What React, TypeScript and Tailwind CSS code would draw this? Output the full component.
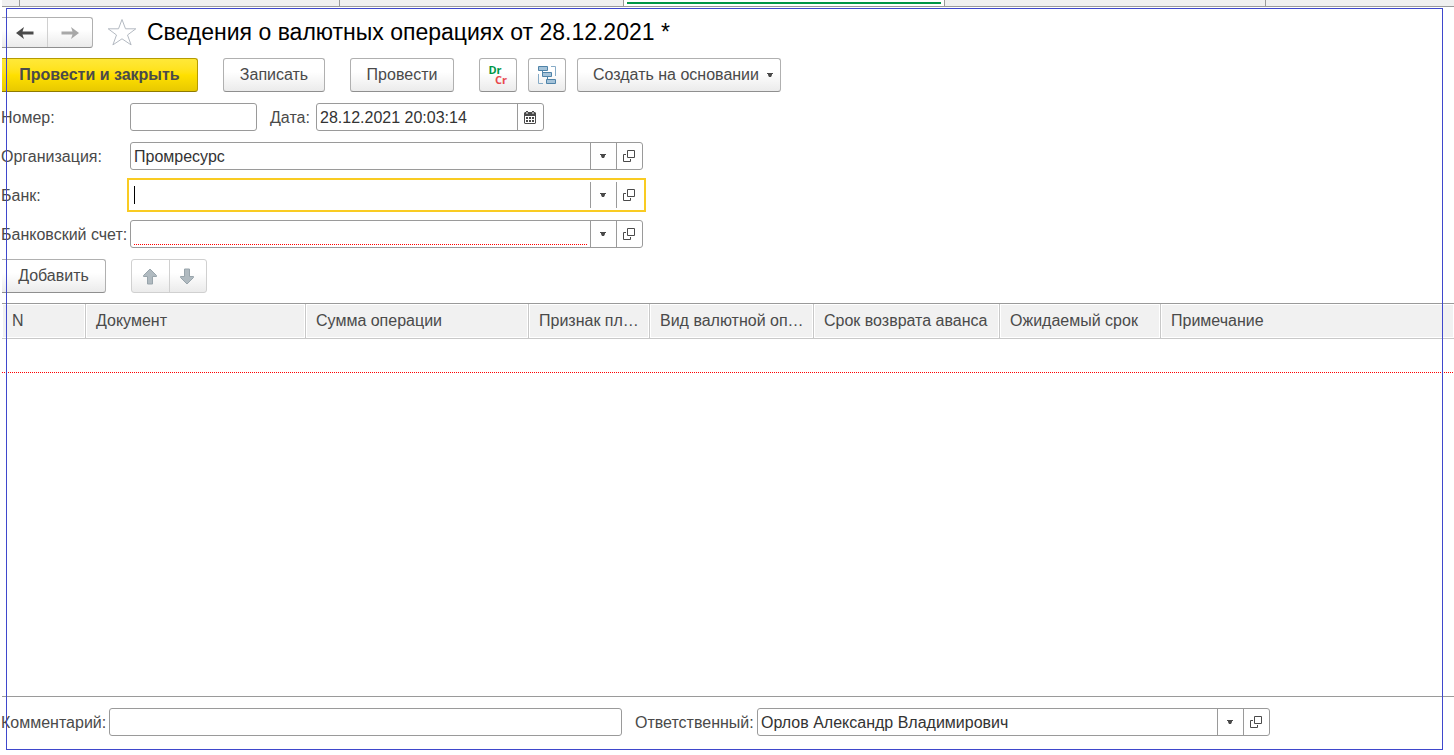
import type { ReactNode } from "react"

const columns = [
  { title: "N", width: "w-[84px]" },
  { title: "Документ", width: "w-[220px]" },
  { title: "Сумма операции", width: "w-[223px]" },
  { title: "Признак пл…", width: "w-[121px]" },
  { title: "Вид валютной оп…", width: "w-[164px]" },
  { title: "Срок возврата аванса", width: "w-[186px]" },
  { title: "Ожидаемый срок", width: "w-[161px]" },
  { title: "Примечание", width: "" },
]

const buttonBase =
  "flex h-[34px] items-center justify-center rounded-[3px] border border-[#b0b0b0] border-b-[#8f8f8f] bg-linear-to-b from-white from-40% to-[#ebebeb]"

function CaretIcon() {
  return (
    <svg width="6" height="4" viewBox="0 0 6 4" fill="#4a4a4a" aria-hidden="true">
      <path d="M0 0h6v1H5v1L4 4H2L1 2V1H0z" />
    </svg>
  )
}

function OpenIcon() {
  return (
    <svg width="12" height="12" viewBox="0 0 12 12" fill="none" stroke="#4a4a4a" aria-hidden="true">
      <path d="M4.500.5h7v7h-7zM3 4.500H.5v7h7V9" />
    </svg>
  )
}

function CalendarIcon() {
  return (
    <svg width="12" height="13" viewBox="0 0 12 13" aria-hidden="true">
      <path d="M1 1h1V0h2v1h4V0h2v1h1l1 1v10l-1 1H1l-1-1V2z" fill="#4a4a4a" />
      <path d="M2.500 1h1v2h-1zM8.500 1h1v2h-1z" fill="#fff" />
      <path d="M1 5h10v7H1z" fill="#fff" />
      <path d="M2 6h2v2H2zM5 6h2v2H5zM8 6h2v2H8zM2 9h2v2H2zM5 9h2v2H5zM8 9h2v2H8z" fill="#4a4a4a" />
    </svg>
  )
}

function StarIcon() {
  return (
    <svg width="30" height="28" viewBox="0 0 30 28" fill="none" stroke="#b4bac2" aria-hidden="true">
      <path d="M15 1.500l3.500 9.300h10.300l-8.300 6.200 3.600 9.900L15 20.800l-9.100 6.100L9.500 17 1.200 10.800h10.300z" />
    </svg>
  )
}

function ArrowIcon({ color, flip }: { color: string; flip?: boolean }) {
  return (
    <svg width="18" height="12" viewBox="0 0 18 12" fill={color} className={flip ? "rotate-180" : ""} aria-hidden="true">
      <path d="M0 6L8 0L6.500 4.500H17.500v3H6.500L8 12z" />
    </svg>
  )
}

function MoveIcon({ down }: { down?: boolean }) {
  return (
    <svg width="16" height="17" viewBox="0 0 16 17" className={down ? "rotate-180" : ""} aria-hidden="true">
      <path d="M8 1l6.500 6.500v1h-4v7.500h-5V8.500h-4v-1z" fill="#b0bac0" stroke="#98a4ab" />
    </svg>
  )
}

function StructureIcon() {
  return (
    <svg width="20" height="20" viewBox="0 0 20 20" fill="none" aria-hidden="true">
      <path d="M14 1.500h4.500V11M1.500 9v9.500H6" stroke="#86abc7" />
      <path d="M5.500 5v4M10.500 11v5h2" stroke="#4f83a8" />
      <g fill="#a5c3d9" stroke="#4f83a8">
        <path d="M1.500 1.500h9v4h-9zM5.500 7.500h9v4h-9zM9.500 14.500h9v4h-9z" />
      </g>
    </svg>
  )
}

function FieldButton({ label, children }: { label: string; children: ReactNode }) {
  return (
    <button
      type="button"
      aria-label={label}
      className="flex w-[26px] shrink-0 items-center justify-center border-l border-[#9a9a9a] pr-px"
    >
      {children}
    </button>
  )
}

type FieldProps = {
  id: string
  width: string
  value?: string
  active?: boolean
  required?: boolean
  children?: ReactNode
}

function Field({ id, width, value = "", active, required, children }: FieldProps) {
  return (
    <div
      className={`flex h-7 shrink-0 border bg-white ${width} ${
        active ? "border-white outline-2 outline-offset-1 outline-[#f9cb22]" : "rounded-[3px] border-[#9a9a9a]"
      }`}
    >
      <div className="flex min-w-0 flex-1 items-center px-[3px]">
        {active && <span className="h-[18px] w-px bg-black" />}
        <input
          id={id}
          defaultValue={value}
          className={`w-full min-w-0 text-[#333] outline-none ${
            required ? "mt-auto mb-0.5 h-[22px] border-b border-dotted border-[#ff0000]" : "h-full pt-0.5"
          }`}
        />
      </div>
      {children}
    </div>
  )
}

function LookupButtons() {
  return (
    <>
      <FieldButton label="Выбрать">
        <CaretIcon />
      </FieldButton>
      <FieldButton label="Открыть">
        <OpenIcon />
      </FieldButton>
    </>
  )
}

function TabStrip() {
  return (
    <nav className="ml-0.5 flex h-[7px] border-b border-[#9a9a9a] bg-[#f0f0f0]">
      <div className="w-[18px] border-r border-[#9a9a9a]" />
      <div className="w-[320px] border-r border-[#9a9a9a]" />
      <div className="w-[284px] border-r border-[#9a9a9a]" />
      <div className="w-[321px] border-r border-[#9a9a9a] bg-white px-[3px] pt-0.5">
        <div className="h-0.5 bg-[#009646]" />
      </div>
      <div className="w-[321px] border-r border-[#9a9a9a]" />
    </nav>
  )
}

export default function App() {
  return (
    <div className="relative flex min-h-screen flex-col overflow-hidden bg-white font-['Liberation_Sans',Arial,sans-serif] text-base leading-5 text-[#4a4a4a]">
      <TabStrip />

      <header className="mt-[10px] ml-0.5 flex h-[31px] items-center">
        <div className="flex h-[31px] rounded-r-[3px] border border-l-0 border-[#b0b0b0] border-b-[#8f8f8f] bg-linear-to-b from-white from-40% to-[#ebebeb]">
          <button type="button" aria-label="Назад" className="flex w-[45px] items-center justify-center">
            <ArrowIcon color="#4a4a4a" />
          </button>
          <button
            type="button"
            aria-label="Вперед"
            className="flex w-[45px] items-center justify-center border-l border-[#d0d0d0]"
          >
            <ArrowIcon color="#a8a8a8" flip />
          </button>
        </div>
        <button type="button" aria-label="Добавить в избранное" className="ml-[14px] pb-0.5">
          <StarIcon />
        </button>
        <h1 className="ml-[10px] pb-0.5 text-[23px] leading-7 whitespace-nowrap text-black">
          Сведения о валютных операциях от 28.12.2021 *
        </h1>
      </header>

      <div className="mt-[10px] ml-0.5 flex whitespace-nowrap">
        <button
          type="button"
          className="h-[34px] w-[196px] rounded-r-[3px] border border-l-0 border-[#b59b00] border-b-[#8f7a00] bg-linear-to-b from-[#ffe838] via-[#ffe000] to-[#e8c900] font-bold"
        >
          Провести и закрыть
        </button>
        <button type="button" className={`${buttonBase} ml-[25px] w-[102px]`}>
          Записать
        </button>
        <button type="button" className={`${buttonBase} ml-[25px] w-[104px]`}>
          Провести
        </button>
        <button
          type="button"
          className={`${buttonBase} ml-[25px] w-[38px] font-['Open_Sans',sans-serif] text-[11px] leading-[10px] font-bold`}
        >
          <span className="flex flex-col">
            <span className="pr-1.5 text-[#009646]">Dr</span>
            <span className="pl-1.5 text-[#e8484d]">Cr</span>
          </span>
        </button>
        <button type="button" aria-label="Структура подчиненности" className={`${buttonBase} ml-[11px] w-[38px]`}>
          <StructureIcon />
        </button>
        <button type="button" className={`${buttonBase} ml-[11px] w-[204px] gap-2 pl-2`}>
          Создать на основании
          <CaretIcon />
        </button>
      </div>

      <form className="mt-[11px] ml-px flex flex-col gap-[11px] whitespace-nowrap">
        <div className="flex items-center">
          <label htmlFor="number" className="w-[129px] pt-0.5">
            Номер:
          </label>
          <Field id="number" width="w-[127px]" />
          <label htmlFor="date" className="ml-[13px] w-[46px] pt-0.5">
            Дата:
          </label>
          <Field id="date" width="w-[228px]" value="28.12.2021 20:03:14">
            <FieldButton label="Календарь">
              <CalendarIcon />
            </FieldButton>
          </Field>
        </div>
        <div className="flex items-center">
          <label htmlFor="organization" className="w-[129px] pt-0.5">
            Организация:
          </label>
          <Field id="organization" width="w-[513px]" value="Промресурс">
            <LookupButtons />
          </Field>
        </div>
        <div className="flex items-center">
          <label htmlFor="bank" className="w-[129px] pt-0.5">
            Банк:
          </label>
          <Field id="bank" width="w-[513px]" active>
            <LookupButtons />
          </Field>
        </div>
        <div className="flex items-center">
          <label htmlFor="account" className="w-[129px] pt-0.5">
            Банковский счет:
          </label>
          <Field id="account" width="w-[513px]" required>
            <LookupButtons />
          </Field>
        </div>
      </form>

      <div className="mt-[11px] ml-0.5 flex">
        <button type="button" className={`${buttonBase} w-[104px] rounded-l-none border-l-0`}>
          Добавить
        </button>
        <div className="ml-[25px] flex h-[34px] rounded-[3px] border border-[#d0d0d0] bg-linear-to-b from-white from-40% to-[#ebebeb]">
          <button type="button" aria-label="Переместить вверх" className="flex w-[37px] items-center justify-center pr-px">
            <MoveIcon />
          </button>
          <button
            type="button"
            aria-label="Переместить вниз"
            className="flex w-[37px] items-center justify-center border-l border-[#d0d0d0] pr-0.5"
          >
            <MoveIcon down />
          </button>
        </div>
      </div>

      <main className="mt-[10px] ml-0.5 flex-1 border-t border-[#9a9a9a]">
        <table className="w-full table-fixed border-separate border-spacing-0">
          <thead>
            <tr className="h-[35px]">
              {columns.map((column) => (
                <th
                  key={column.title}
                  className={`border-r border-b border-[#c8c8c8] bg-[#f1f1f1] p-0 pl-[10px] text-left font-normal whitespace-nowrap shadow-[inset_0_0_0_1px_#fff] last:border-r-0 ${column.width}`}
                >
                  {column.title}
                </th>
              ))}
            </tr>
          </thead>
          <tbody>
            <tr>
              <td colSpan={columns.length} className="p-0 pt-[33px]">
                <div className="h-px bg-[repeating-linear-gradient(90deg,#ff0000_0px,#ff0000_1px,#ffffff_1px,#ffffff_2px)]" />
              </td>
            </tr>
          </tbody>
        </table>
      </main>

      <footer className="ml-0.5 border-t border-[#9a9a9a] pt-[11px] pb-[19px]">
        <div className="-ml-px flex items-center whitespace-nowrap">
          <label htmlFor="comment" className="w-[108px] pt-0.5">
            Комментарий:
          </label>
          <Field id="comment" width="w-[513px]" />
          <label htmlFor="responsible" className="ml-[13px] w-[122px] pt-0.5">
            Ответственный:
          </label>
          <Field id="responsible" width="w-[513px]" value="Орлов Александр Владимирович">
            <LookupButtons />
          </Field>
        </div>
      </footer>

      {/* selection frame over the form */}
      <div className="pointer-events-none absolute top-2 right-[11px] bottom-[5px] left-1.5 border border-[#3f48cc]" />
    </div>
  )
}
